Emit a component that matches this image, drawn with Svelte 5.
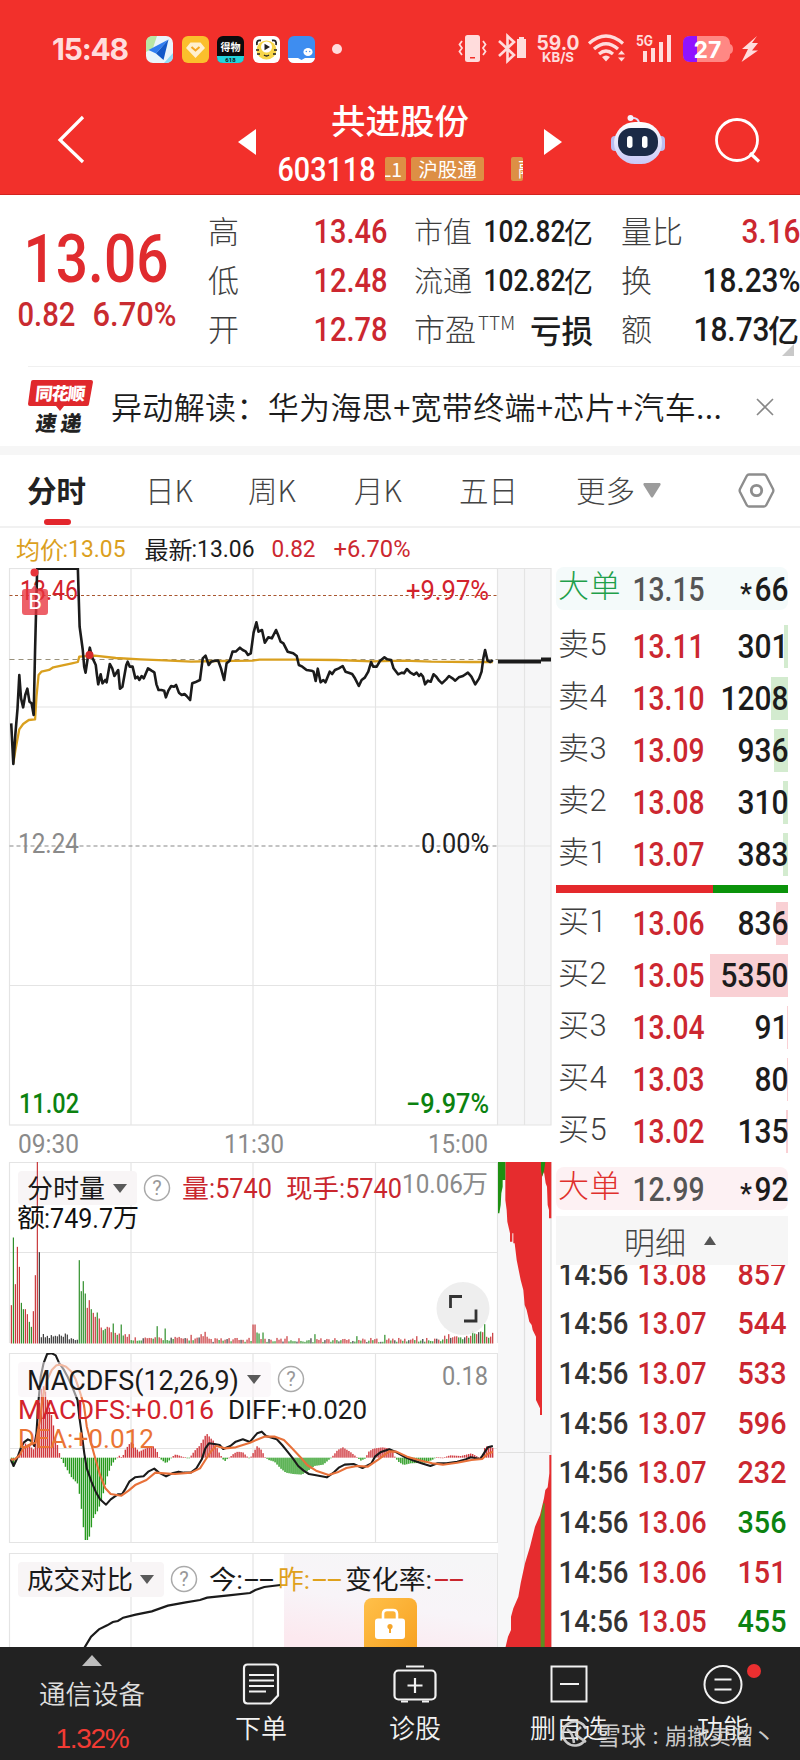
<script>
  const quotes = [
    { a: '高', av: '13.46', b: '市值', bv: '102.82', bu: '亿', c: '量比', cv: '3.16', cw: 56, red: true },
    { a: '低', av: '12.48', b: '流通', bv: '102.82', bu: '亿', c: '换', cv: '18.23%', cw: 95 },
    { a: '开', av: '12.78', b: '市盈', sup: 'TTM', bt: '亏损', c: '额', cv: '18.73', cu: '亿', cw: 73 }
  ];

  const sells = [
    { label: '卖5', price: '13.11', vol: '301', bar: 4 },
    { label: '卖4', price: '13.10', vol: '1208', bar: 17 },
    { label: '卖3', price: '13.09', vol: '936', bar: 14 },
    { label: '卖2', price: '13.08', vol: '310', bar: 5 },
    { label: '卖1', price: '13.07', vol: '383', bar: 5 }
  ];
  const buys = [
    { label: '买1', price: '13.06', vol: '836', bar: 12 },
    { label: '买2', price: '13.05', vol: '5350', bar: 78 },
    { label: '买3', price: '13.04', vol: '91', bar: 1 },
    { label: '买4', price: '13.03', vol: '80', bar: 1 },
    { label: '买5', price: '13.02', vol: '135', bar: 2 }
  ];
  const volWidth = { 2: 31, 3: 48, 4: 65 };

  const ticks = [
    ['13.08', '857', 'red'],
    ['13.07', '544', 'red'],
    ['13.07', '533', 'red'],
    ['13.07', '596', 'red'],
    ['13.07', '232', 'red'],
    ['13.06', '356', 'green'],
    ['13.06', '151', 'red'],
    ['13.05', '455', 'green']
  ];

  const gridX = [131, 253, 375.5];

  const pricePts = '32,820 38,942 44,850 50,775 55,675 60,745 66,772 72,735 78,716 84,755 90,760 96,795 100,600 106,356 222,356 227,530 236,600 240,650 244,668 250,625 256,593 262,620 273,645 276,672 280,703 287,673 292,700 300,690 304,697 313,642 320,655 326,678 337,660 342,716 349,710 360,645 364,635 370,650 378,650 386,685 392,680 397,690 404,678 410,685 422,655 432,662 440,667 446,703 452,720 460,720 468,722 473,742 480,722 488,708 496,710 502,705 510,728 518,735 526,732 532,738 542,750 548,700 556,697 570,690 578,625 586,617 595,645 602,635 612,632 622,632 630,655 639,690 646,640 655,632 663,605 673,604 684,593 692,600 700,604 707,615 715,610 723,548 731,517 737,545 747,540 755,578 765,562 775,565 787,540 793,555 800,575 808,580 820,605 836,610 846,618 852,645 862,650 874,660 888,662 894,665 900,693 906,656 914,697 922,690 928,697 940,665 947,672 955,660 966,655 977,648 985,665 994,668 1004,672 1012,685 1023,708 1031,690 1040,683 1050,665 1058,636 1064,650 1074,650 1084,632 1096,622 1104,628 1115,630 1122,655 1135,673 1146,668 1152,670 1160,657 1170,668 1180,674 1188,668 1195,678 1200,672 1206,680 1212,703 1220,692 1228,695 1236,673 1244,680 1252,692 1260,700 1272,688 1280,678 1290,685 1298,692 1308,682 1320,678 1334,668 1344,680 1355,703 1366,685 1373,665 1378,625 1383,600 1390,632 1398,636 1405,630';
  const avgPts = '38,940 44,900 55,838 66,822 82,810 100,808 104,740 110,675 118,665 140,660 152,652 175,647 205,640 222,636 226,620 270,617 330,624 400,628 470,631 545,635 620,633 720,632 740,629 850,629 960,630 1060,634 1150,632 1230,635 1340,636 1405,636';

  const diffPts = '30,358 38,378 48,355 58,325 66,308 78,298 88,303 96,318 102,280 108,180 114,110 122,70 132,42 145,40 156,46 165,68 178,88 190,112 204,145 217,180 222,230 230,290 236,340 243,385 256,425 268,455 280,478 297,494 310,478 330,463 342,462 352,445 362,425 378,412 402,409 415,395 432,386 445,398 465,409 482,400 500,395 515,398 535,397 550,385 565,358 575,325 585,310 600,312 615,315 625,327 645,318 660,305 680,298 700,306 712,290 720,280 733,275 745,288 775,298 790,315 805,335 820,355 835,378 850,392 865,402 885,406 915,412 935,397 950,382 965,374 990,372 1015,384 1040,370 1050,350 1065,337 1090,328 1110,337 1135,352 1160,362 1180,370 1205,378 1225,370 1250,370 1280,365 1305,358 1318,352 1345,357 1358,335 1366,322 1380,318';
  const deaPts = '30,358 42,358 55,345 66,325 80,315 100,308 112,240 120,170 132,120 145,90 158,76 170,74 185,80 200,95 212,118 225,160 235,195 243,260 255,310 268,360 280,405 295,445 310,462 340,467 360,452 380,434 410,420 435,398 460,400 490,402 535,398 560,385 575,360 590,335 605,318 630,325 660,322 700,308 740,290 770,290 795,300 815,322 840,350 860,375 885,392 920,405 945,397 970,384 1000,378 1030,380 1060,358 1090,334 1110,335 1140,350 1180,362 1210,370 1240,374 1280,368 1320,360 1350,357 1365,342 1380,335';

  // envelope of the MACD histogram, interpolated once per minute
  const envelope = '30,358 35,385 44,365 50,345 70,310 85,320 96,330 104,270 110,190 118,130 126,150 135,190 145,230 155,290 165,335 170,353 180,375 200,412 218,432 226,490 233,560 240,608 250,590 262,530 275,510 288,465 300,410 310,380 320,362 328,353 335,346 342,354 350,330 362,312 370,305 378,322 390,335 402,328 415,322 428,318 438,330 445,350 452,360 465,370 475,360 482,350 492,343 510,350 530,355 538,342 548,328 558,318 568,300 578,280 590,295 600,305 612,335 620,350 628,365 636,357 645,350 655,340 665,335 680,337 692,350 700,355 708,340 720,318 732,330 742,352 752,360 768,365 785,385 800,398 820,402 845,404 865,390 880,378 905,374 920,360 930,350 945,330 960,322 980,335 995,348 1010,362 1022,356 1032,335 1045,326 1070,322 1088,325 1100,335 1106,352 1115,365 1130,375 1150,370 1190,368 1210,360 1220,352 1240,353 1260,346 1290,348 1320,340 1340,352 1350,348 1358,320 1370,318 1382,325'
    .split(' ')
    .map((p) => p.split(',').map(Number));

  function envAt(x) {
    for (let i = 1; i < envelope.length; i++) {
      const [x0, y0] = envelope[i - 1];
      const [x1, y1] = envelope[i];
      if (x <= x1) return y0 + ((y1 - y0) * (x - x0)) / (x1 - x0);
    }
    return 325;
  }

  const macdBars = [];
  for (let i = 0; i < 242; i++) {
    const x = 32 + i * 5.59;
    const y = envAt(x);
    macdBars.push({ x: x / 2.8, y: Math.min(y, 353) / 3 + 1340, h: Math.max(Math.abs(353 - y) / 3, 0.6), up: y < 353 });
  }

  const opening = [115, 318, 178, 290, 230, 122, 103, 103, 88, 65, 50, 97, 205, 545, 274];
  const openingColor = 'rgrrrggrrggrrrk';
  const afterHalt = [250, 157, 187, 150, 107, 130, 103, 92, 80, 93, 75, 48, 40, 44, 50, 48, 34, 60, 32, 26, 30, 57, 24, 28, 20, 28];
  const afterColor = 'ggggrrgrrgrrggrrrgrgrggrrr';
  const peaks = { 73: 52, 77: 45, 90: 26, 95: 28, 96: 22, 97: 35, 121: 57, 122: 57, 123: 33, 124: 30, 126: 33, 138: 22, 152: 28, 173: 22, 187: 26, 203: 22, 219: 28, 231: 38, 232: 30, 233: 28, 234: 34, 235: 36, 236: 34, 237: 58, 241: 32 };
  const colors = { r: '#c9393c', g: '#2f8f2b', k: '#3a3a3a' };

  const volBars = [];
  for (let i = 0; i < 242; i++) {
    const rnd = Math.abs(Math.sin(i * 12.9898) * 43758.5453) % 1;
    let h, c;
    if (i < 15) {
      h = opening[i];
      c = openingColor[i];
    } else if (i < 34) {
      h = i > 28 ? 8 + rnd * 8 : 10 + rnd * 20;
      c = 'k';
    } else if (i < 60) {
      h = afterHalt[i - 34];
      c = afterColor[i - 34];
    } else {
      h = (i < 100 ? 8 : i > 215 ? 12 : 4) + rnd * 13;
      if (peaks[i]) h = peaks[i];
      c = i % 7 === 3 ? 'k' : rnd > 0.5 ? 'r' : 'g';
      if (i === 121 || i === 122 || i === 241) c = 'r';
      if (i === 73 || i === 77 || i === 237 || i === 152) c = 'g';
    }
    volBars.push({ x: 11.3 + i * 1.997, h: h / 3, c: colors[c] });
  }
</script>

<!-- condensed figures for html rows -->
{#snippet din(text, w, cap = 24, weight = 500)}
  <svg class="din" width={w} height={cap}>
    <text x="-1.5" y={cap} textLength={w + 3} lengthAdjust="spacingAndGlyphs" font-size={cap / 0.711} font-weight={weight}>{text}</text>
  </svg>
{/snippet}

<!-- chart label: left edge, vertical centre, drawn width -->
{#snippet lab(x, cy, text, w, fill, size = 26, weight = 400)}
  <text x={x - 1} y={cy + size * 0.36} textLength={w + 2} lengthAdjust="spacingAndGlyphs" font-size={size} font-weight={weight} {fill}>{text}</text>
{/snippet}

{#snippet help(cx, cy)}
  <circle {cx} {cy} r="12.5" fill="#fff" stroke="#aaa" stroke-width="1.5" />
  <text x={cx} y={cy + 7} text-anchor="middle" font-size="20" fill="#999">?</text>
{/snippet}

<div class="page">
  <header>
    <div class="status">
      <span class="clock">15:48</span>
      <div class="apps">
        <svg width="27" height="27" viewBox="0 0 27 27">
          <rect width="27" height="27" rx="7" fill="#e9f4fb" />
          <path d="M0 7Q0 0 7 0H11L7 12 0 16Z" fill="#b9e6a4" />
          <path d="M18 27L27 17V20Q27 27 20 27Z" fill="#8fdcf7" />
          <path d="M22.500 3.500L2.500 14 10 17.500Z" fill="#2f7df0" />
          <path d="M22.500 3.500L10 17.500 17.500 24Z" fill="#1258c8" />
        </svg>
        <svg width="27" height="27" viewBox="0 0 27 27">
          <rect width="27" height="27" rx="6" fill="#fbbf2c" />
          <path d="M8.500 6.500H18.500L23 12 13.500 22 4 12Z" fill="#fff0cf" />
          <path d="M9.500 11L13.500 14.500 17.500 11" fill="none" stroke="#f5a623" stroke-width="2" />
        </svg>
        <svg width="27" height="27" viewBox="0 0 27 27">
          <rect width="27" height="27" rx="6" fill="#0b0b0d" />
          <path d="M0 20H27V21Q27 27 21 27H6Q0 27 0 21Z" fill="#22d3dc" />
          <text x="13.500" y="15" text-anchor="middle" font-size="10" font-weight="700" fill="#fff">得物</text>
          <text x="13.500" y="26" text-anchor="middle" font-size="6" font-weight="700" fill="#111">618</text>
        </svg>
        <svg width="27" height="27" viewBox="0 0 27 27">
          <rect width="27" height="27" rx="6" fill="#fff" />
          <path d="M4 9Q3 3.500 8 4.500M23 9Q24 3.500 19 4.500" fill="none" stroke="#222" stroke-width="1.800" />
          <ellipse cx="13.500" cy="14" rx="10" ry="9.500" fill="#f7d64a" />
          <path d="M3 14H6M21 14H24M4 18H7M20 18H23M11 19Q13.500 21 16 19" stroke="#222" stroke-width="1.300" fill="none" />
          <circle cx="13.500" cy="11" r="5.500" fill="#fff" />
          <path d="M11.500 7.800V14.200L17 11Z" fill="#222" />
        </svg>
        <svg width="27" height="27" viewBox="0 0 27 27">
          <rect width="27" height="27" rx="6" fill="#3e8df0" />
          <path d="M0 22H10L13.500 24 17 22H27Q26 27 21 27H6Q1 27 0 22Z" fill="#fff" />
          <ellipse cx="20" cy="16" rx="4.600" ry="4" fill="#fff" />
          <circle cx="18.300" cy="15.500" r=".7" fill="#3e8df0" />
          <circle cx="21.700" cy="15.500" r=".7" fill="#3e8df0" />
        </svg>
      </div>
      <span class="dot"></span>
      <svg class="sys" width="304" height="30" viewBox="457 34 304 30" fill="#ffdcdc">
        <rect x="465" y="35" width="15" height="27" rx="2.500" />
        <rect x="470" y="57" width="5" height="1.500" fill="#f2302b" />
        <path d="M462 41L459.500 44.500 462 48 459.500 51.500 462 55M483 41L485.500 44.500 483 48 485.500 51.500 483 55" fill="none" stroke="#ffdcdc" stroke-width="1.800" />
        <path d="M499 41L514 55 507.500 61V36L514 42 499 56" fill="none" stroke="#ffdcdc" stroke-width="2.600" />
        <path d="M519 37H524V39H526V58H517V39H519Z" />
        <text x="536.500" y="49.500" font-size="19.500" font-weight="700" textLength="43" lengthAdjust="spacingAndGlyphs">59.0</text>
        <text x="542" y="61.500" font-size="13.500" font-weight="700" textLength="32" lengthAdjust="spacingAndGlyphs">KB/S</text>
        <path d="M589 43.500Q606 28.500 623 43.500M594 49Q606 38.500 618 49M599 54Q606 48 613 54" fill="none" stroke="#ffdcdc" stroke-width="3.200" />
        <path d="M602 57Q606 54 610 57L606 61.500ZM618 54.500L621.500 50.500 625 54.500ZM618 57.500H625L621.500 61.500Z" />
        <text x="636" y="46" font-size="14" font-weight="700" textLength="17" lengthAdjust="spacingAndGlyphs">5G</text>
        <path d="M643 51H647V62H643ZM651 48H655V62H651ZM659 42H663V62H659ZM667 35H671V62H667Z" />
        <rect x="683" y="36" width="47" height="26" rx="7" fill="#ff8884" />
        <path d="M730 44Q733 45 733 49T730 54Z" fill="#ff8884" />
        <path d="M697 36V62H690Q683 62 683 55V43Q683 36 690 36Z" fill="#9013fe" />
        <text x="707.500" y="57.500" text-anchor="middle" font-size="23" font-weight="700" fill="#fff">27</text>
        <path d="M757 36L742 49H748L741.500 62 758 50.500H752L758 43H752Z" />
      </svg>
    </div>
    <div class="nav">
      <svg class="back" width="28" height="50" viewBox="0 0 28 50"><path d="M26 2L3 25 26 47" fill="none" stroke="#fff" stroke-width="3.200" /></svg>
      <svg class="prev" width="19" height="28" viewBox="0 0 19 28"><path d="M0 14L18 1V27Z" fill="#fff" /></svg>
      <div class="stock">
        <h1>共进股份</h1>
        <div class="code">
          {@render din('603118', 95, 23)}
          <span class="tag first">L1</span>
          <span class="tag">沪股通</span>
          <span class="tag last">融</span>
        </div>
      </div>
      <svg class="next" width="19" height="28" viewBox="0 0 19 28"><path d="M19 14L1 1V27Z" fill="#fff" /></svg>
      <svg class="robot" width="56" height="52" viewBox="0 0 56 52">
        <defs>
          <linearGradient id="shell" x1="0" y1="0" x2="0" y2="1">
            <stop offset="0" stop-color="#fff" />
            <stop offset="1" stop-color="#c9c9f7" />
          </linearGradient>
        </defs>
        <path d="M20 4Q29 3 29 10" fill="none" stroke="#dfe0fb" stroke-width="2" />
        <circle cx="20.500" cy="4" r="3" fill="#f5f4ff" />
        <rect x="1" y="22" width="8" height="15" rx="4" fill="#b9bdf0" />
        <rect x="47" y="22" width="8" height="15" rx="4" fill="#b9bdf0" />
        <rect x="4" y="8" width="48" height="42" rx="21" fill="url(#shell)" />
        <rect x="8" y="14" width="40" height="28" rx="13" fill="#1b2a47" />
        <rect x="17" y="22" width="5.500" height="12" rx="2.700" fill="#fff" />
        <rect x="32" y="22" width="5.500" height="12" rx="2.700" fill="#fff" />
      </svg>
      <svg class="search" width="46" height="46" viewBox="0 0 46 46"><circle cx="22" cy="22" r="20.500" fill="none" stroke="#fff" stroke-width="2.800" /><path d="M35 35L44 43.500" stroke="#fff" stroke-width="3.200" /></svg>
    </div>
  </header>

  <section class="quote">
    <div class="last-price">
      <div class="big">{@render din('13.06', 142, 48, 500)}</div>
      <div class="change">{@render din('0.82', 55, 23.5, 500)}{@render din('6.70%', 81, 23.5, 500)}</div>
    </div>
    <div class="stats">
      {#each quotes as q}
        <div class="stat">
          <span class="key k1">{q.a}</span>
          <span class="v1 red">{@render din(q.av, 71)}</span>
          <span class="key k2" class:big-key={q.sup}>{q.b}{#if q.sup}<sup>{q.sup}</sup>{/if}</span>
          <span class="v2">
            {#if q.bt}<b>{q.bt}</b>{:else}{@render din(q.bv, 79, 22)}<span class="unit small">{q.bu}</span>{/if}
          </span>
          <span class="key k3">{q.c}</span>
          <span class="v3" class:red={q.red}>{@render din(q.cv, q.cw)}{#if q.cu}<span class="unit">{q.cu}</span>{/if}</span>
        </div>
      {/each}
    </div>
    <i class="corner"></i>
  </section>

  <section class="news">
    <svg width="66" height="56" viewBox="0 0 66 56">
      <path d="M5 1H63Q65 1 65 3L61 25Q61 27 59 27H36L32 32 28 27H2Q0 27 0 25L3 3Q3 1 5 1Z" fill="#e0282c" />
      <text x="7" y="21" font-size="17.500" font-weight="900" fill="#fff" textLength="50" transform="skewX(-6) translate(2 0)">同花顺</text>
      <text x="10" y="52" font-size="21" font-weight="900" fill="#222" textLength="46" transform="skewX(-8) translate(4 0)">速递</text>
    </svg>
    <p>异动解读：华为海思+宽带终端+芯片+汽车...</p>
    <svg class="close" width="18" height="18" viewBox="0 0 18 18"><path d="M1 1L17 17M17 1L1 17" stroke="#888" stroke-width="1.600" /></svg>
  </section>

  <nav class="tabs">
    <span class="active" style="width: 118px">分时</span>
    <span style="width: 103px">日K</span>
    <span style="width: 106px">周K</span>
    <span style="width: 105px">月K</span>
    <span style="width: 117px">五日</span>
    <span>更多</span>
    <svg class="more" width="18" height="15" viewBox="0 0 18 15"><path d="M1 0H17Q18 1 17.500 2L10 14Q9 15 8 14L.5 2Q0 1 1 0Z" fill="#9c9c9c" /></svg>
    <svg class="gear" width="37" height="35" viewBox="0 0 37 35"><path d="M11 1.500H26Q27.500 1.500 28.300 3L35 16Q35.700 17.500 35 19L28.300 32Q27.500 33.500 26 33.500H11Q9.500 33.500 8.700 32L2 19Q1.300 17.500 2 16L8.700 3Q9.500 1.500 11 1.500Z" fill="none" stroke="#8d8d8d" stroke-width="2.400" /><circle cx="18.500" cy="17.500" r="5.200" fill="none" stroke="#8d8d8d" stroke-width="2.800" /></svg>
  </nav>

  <main>
    <div class="left">
      <div class="info">
        <span class="gold">均价{@render din(':13.05', 60, 17, 400)}</span>
        <span>最新{@render din(':13.06', 60, 17, 400)}</span>
        <span class="red">{@render din('0.82', 41, 17, 400)}</span>
        <span class="red">{@render din('+6.70%', 74, 17, 400)}</span>
      </div>

      <svg class="chart" width="552" height="594" viewBox="0 568 552 594">
        <rect x="498" y="568" width="53" height="557" fill="#f6f6f7" />
        <g stroke="#e4e4e4" stroke-width="1.200" fill="none">
          <rect x="9.500" y="568.500" width="488" height="556.500" />
          <path d="M9.500 707H551M9.500 985.500H551M498 846H551M498 568.500H551V1125H498M524.500 568V1125" />
          {#each gridX as x}
            <path d="M{x} 568V1125" />
          {/each}
        </g>
        <path d="M9.500 595.500H498" stroke="#a8562f" stroke-width="1.200" stroke-dasharray="3 2.500" />
        <path d="M9.500 659.500H498" stroke="#99917c" stroke-width="1.200" stroke-dasharray="5 4" />
        <path d="M9.500 846H498" stroke="#888" stroke-width="1.200" stroke-dasharray="4 3" />
        {@render lab(21, 590, '13.46', 56, '#d3232c', 27)}
        {@render lab(407, 590, '+9.97%', 81, '#d3232c', 27)}
        {@render lab(19, 843, '12.24', 59, '#8a8a8a', 27)}
        {@render lab(422, 843, '0.00%', 66, '#222', 27)}
        {@render lab(20, 1103.5, '11.02', 58, '#0c8210', 27, 500)}
        {@render lab(407, 1103.5, '−9.97%', 81, '#0c8210', 27, 500)}
        {@render lab(19, 1144, '09:30', 59, '#8a8a8a', 26)}
        {@render lab(225, 1144, '11:30', 58, '#8a8a8a', 26)}
        {@render lab(429, 1144, '15:00', 58, '#8a8a8a', 26)}
        <g transform="translate(0 450) scale(.35075 .33333)" fill="none" stroke-linejoin="round">
          <polyline points={avgPts} stroke="#d9a01f" stroke-width="2.300" vector-effect="non-scaling-stroke" />
          <polyline points={pricePts} stroke="#1b1b1b" stroke-width="2.600" vector-effect="non-scaling-stroke" />
        </g>
        <path d="M498 661.500H541M541 659.500H551" stroke="#1b1b1b" stroke-width="4" />
        <circle cx="34.500" cy="572.500" r="4" fill="#e8343a" />
        <circle cx="89.500" cy="655" r="4" fill="#d62a2c" />
        <path d="M25 589H31.500L34.500 585 37.500 589H45Q48 589 48 592V612Q48 615 45 615H25Q22 615 22 612V592Q22 589 25 589Z" fill="#e8333d" opacity=".78" />
        <text x="35" y="609" text-anchor="middle" font-size="22" fill="#fff">B</text>
      </svg>

      <div class="lower">
        <div class="panels">
          <svg class="chart" width="498" height="191" viewBox="0 1162 498 191">
            <g stroke="#e4e4e4" stroke-width="1.200" fill="none">
              <path d="M9.500 1343V1162.500H497.500V1343M9.500 1252.500H497.500" />
              {#each gridX as x}
                <path d="M{x} 1162V1343" />
              {/each}
            </g>
            <rect x="18" y="1171" width="119" height="34" rx="4" fill="#f8f5f6" />
            {#each volBars as b}
              <rect x={b.x - 0.5} y={1343.5 - b.h} width="1.2" height={b.h} fill={b.c} />
            {/each}
            {@render lab(28, 1188.5, '分时量', 76, '#1a1a1a', 26)}
            <path d="M113 1184H127L120 1193Z" fill="#5a5a5a" />
            {@render help(157, 1188)}
            {@render lab(183, 1188.5, '量', 25, '#c9262d', 26)}
            {@render lab(210, 1188.5, ':5740', 61, '#c9262d', 27)}
            {@render lab(287, 1188.5, '现手', 51, '#c9262d', 26)}
            {@render lab(340, 1188.5, ':5740', 61, '#c9262d', 27)}
            {@render lab(403, 1184, '10.06', 59, '#8a8a8a', 26)}
            {@render lab(463, 1184, '万', 24, '#8a8a8a', 25)}
            {@render lab(18, 1218, '额', 26, '#111', 26)}
            {@render lab(45, 1218.5, ':749.7', 67, '#111', 27)}
            {@render lab(114, 1218, '万', 24, '#111', 26)}
            <circle cx="463" cy="1308.500" r="26.500" fill="#ececec" opacity=".9" />
            <path d="M450.500 1308V1296.500H462M464 1321H476V1309.500" fill="none" stroke="#333" stroke-width="2.800" />
          </svg>

          <svg class="chart" width="498" height="200" viewBox="0 1353 498 200">
            <g stroke="#e4e4e4" stroke-width="1.200" fill="none">
              <path d="M9.500 1353.500H497.500V1542.500H9.500ZM9.500 1448.500H497.500" />
              {#each gridX as x}
                <path d="M{x} 1353V1543" />
              {/each}
            </g>
            {#each macdBars as b}
              <rect x={b.x - 0.6} y={b.y} width="1.4" height={b.h} fill={b.up ? '#d0393f' : '#279a1e'} />
            {/each}
            <g transform="translate(0 1340) scale(.35714 .33333)" fill="none" stroke-linejoin="round">
              <polyline points={diffPts} stroke="#1b1b1b" stroke-width="2.100" vector-effect="non-scaling-stroke" />
              <polyline points={deaPts} stroke="#e8713a" stroke-width="2.100" vector-effect="non-scaling-stroke" />
            </g>
            <rect x="18" y="1362" width="253" height="35" rx="4" fill="#f8f3f5" opacity=".55" />
            {@render lab(28, 1380.5, 'MACDFS(12,26,9)', 210, '#1a1a1a', 27)}
            <path d="M247 1375H261L254 1384Z" fill="#5a5a5a" />
            {@render help(291, 1379)}
            {@render lab(443, 1375.5, '0.18', 44, '#8a8a8a', 26)}
            {@render lab(19, 1409.5, 'MACDFS:+0.016', 194, '#d3232c', 26)}
            {@render lab(229, 1409.5, 'DIFF:+0.020', 137, '#1a1a1a', 26)}
            {@render lab(19, 1439, 'DEA:+0.012', 134, '#ea7434', 26)}
          </svg>

          <svg class="chart" width="498" height="94" viewBox="0 1553 498 94">
            <defs>
              <linearGradient id="veil" x1="0.7" y1="0" x2="0.3" y2="1">
                <stop offset="0" stop-color="#f6f6f7" />
                <stop offset=".55" stop-color="#f8f4f8" />
                <stop offset="1" stop-color="#fce9ef" />
              </linearGradient>
              <linearGradient id="amber" x1="0" y1="0" x2="1" y2="1">
                <stop offset="0" stop-color="#ffc04a" />
                <stop offset="1" stop-color="#f7a01f" />
              </linearGradient>
            </defs>
            <g stroke="#e4e4e4" stroke-width="1.200" fill="none">
              <path d="M9.500 1647V1553.500H497.500V1647M131 1553V1647M253 1553V1647" />
            </g>
            <rect x="284" y="1554" width="213" height="93" fill="url(#veil)" />
            <rect x="18" y="1562" width="146" height="35" rx="4" fill="#f8f5f6" />
            <g transform="translate(0 1340) scale(.35714 .33333)">
              <polyline points="236,924 255,890 277,868 300,856 316,846 330,843 345,833 380,824 425,814 470,797 520,787 560,780 580,773 640,766 700,759 715,750 740,741 785,735" fill="none" stroke="#1b1b1b" stroke-width="2.200" vector-effect="non-scaling-stroke" />
            </g>
            {@render lab(28, 1579.5, '成交对比', 104, '#1a1a1a', 26)}
            <path d="M140 1575H154L147 1584Z" fill="#5a5a5a" />
            {@render help(184, 1579)}
            {@render lab(210, 1579.5, '今:', 32, '#1a1a1a', 26)}
            {@render lab(279, 1579.5, '昨:', 30, '#dfa11c', 26)}
            {@render lab(346, 1579.5, '变化率:', 85, '#1a1a1a', 26)}
            {@render lab(245, 1578, '--', 28, '#1a1a1a', 28)}
            {@render lab(313, 1578, '--', 28, '#dfa11c', 28)}
            {@render lab(435, 1578, '--', 28, '#c9262d', 28)}
            <rect x="364" y="1598" width="53" height="56" rx="8" fill="url(#amber)" />
            <path d="M383 1619V1614Q383 1610 387 1610H393Q397 1610 397 1614V1619" fill="none" stroke="#fff" stroke-width="2.600" />
            <rect x="375" y="1618.500" width="30" height="20.500" rx="3" fill="#fff" />
            <circle cx="390" cy="1626.500" r="2.600" fill="#f5a52a" />
            <rect x="389" y="1627" width="2" height="6" fill="#f5a52a" />
          </svg>
        </div>

        <svg class="chart" width="54" height="485" viewBox="498 1162 54 485">
          <rect x="498" y="1162" width="53" height="485" fill="#f7f7f8" />
          <path d="M498 1452.500H551M524.500 1162V1647M551 1162V1647" stroke="#e0e0e0" stroke-width="1.200" />
          <g transform="translate(480 1150) scale(.33333)">
            <path d="M76 36H186V795H180V775L168 750V560L158 540 155 525 148 515 140 480 134 465 130 420 122 390 110 330 104 280H100V250H97V275H90V250L82 215 80 180 76 150Z" fill="#e62c2e" />
            <path d="M186 36H214V205H207V180L203 165 201 110 197 100 192 66 186 80Z" fill="#e62c2e" />
            <path d="M54 36H76V90H68V110L64 130 62 165 58 190H54ZM183 36H196L192 62 186 80 183 60Z" fill="#1e9012" />
            <path d="M208 915H214V1494H76L84 1460 93 1440V1400L100 1375 115 1340 122 1300 135 1240 150 1190 165 1130 180 1095 192 1045 196 1020 203 1012 208 970Z" fill="#e62c2e" />
            <path d="M182 1494V1100L190 1060H194V1494Z" fill="#5d8f20" />
          </g>
        </svg>
      </div>
    </div>

    <aside>
      <div class="row deal sell">
        <span class="name green2">大单</span>
        <span class="price gray">{@render din('13.15', 69)}</span>
        <span class="vol"><span class="star">*</span>{@render din('66', 31)}</span>
      </div>
      <div class="book">
        {#each sells as r}
          <div class="row">
            <i class="depth down" style="width: {r.bar}px"></i>
            <span class="name">{r.label}</span>
            <span class="price">{@render din(r.price, 69)}</span>
            <span class="vol">{@render din(r.vol, volWidth[r.vol.length])}</span>
          </div>
        {/each}
      </div>
      <div class="ratio"><i></i></div>
      <div class="book">
        {#each buys as r}
          <div class="row">
            <i class="depth up" style="width: {r.bar}px"></i>
            <span class="name">{r.label}</span>
            <span class="price">{@render din(r.price, 69)}</span>
            <span class="vol">{@render din(r.vol, volWidth[r.vol.length])}</span>
          </div>
        {/each}
      </div>
      <div class="row deal buy">
        <span class="name red2">大单</span>
        <span class="price gray">{@render din('12.99', 69)}</span>
        <span class="vol"><span class="star">*</span>{@render din('92', 31)}</span>
      </div>
      <div class="detail">明细<i></i></div>
      <div class="ticks">
        {#each ticks as [price, vol, dir]}
          <div class="tick">
            <span class="time">{@render din('14:56', 67, 22.5)}</span>
            <span class="price">{@render din(price, 66, 22.5)}</span>
            <span class="vol {dir}">{@render din(vol, 46, 22.5)}</span>
          </div>
        {/each}
      </div>
    </aside>
  </main>

  <footer>
    <div class="sector">
      <i></i>
      <span>通信设备</span>
      <em>1.32%</em>
    </div>
    <div class="item">
      <svg width="44" height="42" viewBox="0 0 44 42" fill="none" stroke="#f2f2f2" stroke-width="2.200"><path d="M8.500 1.500H35.500Q39 1.500 39 5V32.500L31.500 40.500H8.500Q5 40.500 5 37V5Q5 1.500 8.500 1.500Z" /><path d="M10 12H35M10 17.500H35M10 23H35M10 28.500H27" /></svg>
      <span>下单</span>
    </div>
    <div class="item">
      <svg width="44" height="42" viewBox="0 0 44 42" fill="none" stroke="#f2f2f2" stroke-width="2.200"><rect x="1.500" y="7.500" width="41" height="29" rx="4" /><path d="M13 3.500H31M22 15V30M14.500 22.500H29.500M8 38.500H15M29 38.500H36" /></svg>
      <span>诊股</span>
    </div>
    <div class="item">
      <svg width="44" height="42" viewBox="0 0 44 42" fill="none" stroke="#f2f2f2" stroke-width="2"><rect x="4.500" y="3.500" width="35" height="35" /><path d="M13 21H32" /></svg>
      <span>删自选</span>
    </div>
    <div class="item">
      <svg width="44" height="42" viewBox="0 0 44 42" fill="none" stroke="#f2f2f2" stroke-width="2"><circle cx="22" cy="21.500" r="18.500" /><path d="M13.500 16.500H30.500M13.500 26.500H30.500" /></svg>
      <span>功能</span>
      <i class="badge"></i>
    </div>
    <div class="watermark">
      <svg width="28" height="28" viewBox="0 0 28 28" fill="none" stroke="#d8d8d8" stroke-width="2.600"><path d="M24 20A12 12 0 1 1 25 9" /><path d="M6 9Q12 13 13 23M20 7Q14 12 15 15 19 18 25 22" /></svg>
      <span class="brand">雪球</span><span class="colon">:</span><span>崩撤卖溜丶</span>
    </div>
  </footer>
</div>

<style>
  :global(body) {
    background: #fff;
  }

  .page {
    width: 800px;
    height: 1760px;
    overflow: hidden;
    background: #fff;
    color: #1c1c1c;
    font-family: 'Noto Sans CJK SC', sans-serif;
  }

  svg {
    display: block;
    flex-shrink: 0;
  }

  svg text {
    font-family: Roboto, 'Noto Sans CJK SC', sans-serif;
  }

  .din {
    overflow: visible;
    fill: currentColor;
  }

  .red {
    color: #cc2730;
  }

  .green {
    color: #0c8210;
  }

  .gold {
    color: #dba01e;
  }

  header {
    height: 195px;
    box-sizing: border-box;
    padding-top: 34px;
    background: #f2302b;
    border-bottom: 1px solid #d3231f;
    color: #fff;
  }

  .status {
    display: flex;
    align-items: center;
    height: 30px;
    padding-left: 52px;
  }

  .clock {
    width: 94px;
    color: #ffdcdc;
    font: 700 30px/30px Inter, sans-serif;
    letter-spacing: -1.2px;
  }

  .apps {
    display: flex;
    gap: 8.5px;
  }

  .dot {
    width: 10px;
    height: 10px;
    margin: 0 115px 0 17px;
    border-radius: 50%;
    background: #ffdcdc;
  }

  .sys {
    overflow: visible;
  }

  .sys text {
    font-family: Inter, sans-serif;
  }

  .nav {
    display: flex;
    align-items: flex-start;
    padding-left: 57px;
  }

  .back {
    margin-top: 51px;
  }

  .prev {
    margin: 64px 0 0 153px;
  }

  .stock {
    width: 262px;
    margin: 32px 0 0 22px;
  }

  h1 {
    margin: 0 0 0 52px;
    font-size: 34.5px;
    font-weight: 500;
    line-height: 46px;
  }

  .code {
    display: flex;
    align-items: center;
    height: 50px;
    margin-top: 2px;
  }

  .tag {
    box-sizing: border-box;
    width: 73px;
    height: 24px;
    margin-left: 5px;
    border-radius: 2px;
    background: #dd8f45;
    font-size: 19.5px;
    line-height: 23px;
    text-align: center;
    overflow: hidden;
  }

  .tag.first {
    display: flex;
    justify-content: flex-end;
    width: 21px;
    margin-left: 11px;
    padding-right: 4px;
  }

  .tag.last {
    width: 12px;
    margin-left: 27px;
    padding-left: 7px;
    text-align: left;
  }

  .next {
    margin: 64px 0 0 2px;
  }

  .robot {
    margin: 50px 0 0 48px;
  }

  .search {
    margin: 54px 0 0 49px;
  }

  .quote {
    display: flex;
    position: relative;
    height: 171px;
  }

  .last-price {
    width: 208px;
    color: #e02b2e;
  }

  .big {
    height: 48px;
    margin: 39px 0 0 25px;
  }

  .change {
    display: flex;
    gap: 20px;
    margin: 20px 0 0 19px;
    color: #c92b30;
  }

  .stats {
    padding-top: 12px;
  }

  .stat {
    display: flex;
    align-items: center;
    height: 48.7px;
    width: 592px;
  }

  .key {
    color: #3e3e3e;
    font-size: 31px;
    font-weight: 300;
    line-height: 48px;
    white-space: nowrap;
    position: relative;
    top: -1px;
  }

  .k1 {
    width: 107px;
  }

  .v1 {
    width: 72px;
  }

  .k2 {
    box-sizing: border-box;
    width: 93px;
    padding-left: 27px;
    font-size: 29px;
  }

  .big-key {
    font-size: 31px;
  }

  sup {
    display: inline-block;
    margin-left: 2px;
    font-size: 19px;
    line-height: 18px;
    vertical-align: 11px;
  }

  .v2 {
    display: flex;
    justify-content: flex-end;
    align-items: center;
    width: 113px;
  }

  .v2 b {
    margin-left: -40px;
    font-size: 31.5px;
    font-weight: 500;
    line-height: 48px;
  }

  .unit {
    font-size: 31px;
    line-height: 46px;
    font-weight: 500;
  }

  .unit.small {
    font-size: 29px;
    font-weight: 400;
  }

  .k3 {
    width: 64px;
    margin-left: 28px;
  }

  .v3 {
    display: flex;
    flex: 1;
    align-items: center;
    justify-content: flex-end;
    margin-right: 1px;
  }

  .corner {
    position: absolute;
    right: 6px;
    bottom: 10px;
    border-left: 12px solid transparent;
    border-bottom: 12px solid #c9c9c9;
  }

  .news {
    display: flex;
    align-items: center;
    height: 79px;
    padding: 0 26px 0 0;
    margin-left: 28px;
    border-top: 1px solid #f0f0f0;
  }

  .news p {
    flex: 1;
    margin: -2px 0 0 17px;
    font-size: 31px;
    font-weight: 350;
    letter-spacing: 0.35px;
    line-height: 60px;
    white-space: nowrap;
  }

  .tabs {
    display: flex;
    align-items: center;
    height: 71px;
    padding-left: 27px;
    border-top: 9px solid #f6f6f6;
    border-bottom: 2px solid #f1f1f1;
    color: #444;
    font-size: 29.5px;
    font-weight: 300;
  }

  .tabs span {
    line-height: 66px;
    padding-bottom: 3px;
  }

  .tabs .active {
    position: relative;
    color: #222;
    font-weight: 700;
  }

  .active::after {
    content: '';
    position: absolute;
    left: 17px;
    bottom: 0;
    width: 27px;
    height: 6px;
    border-radius: 3px;
    background: #e3262c;
  }

  .more {
    margin-left: 8px;
  }

  .gear {
    margin-left: 77px;
  }

  main {
    display: flex;
    height: 1119px;
  }

  .left {
    width: 555px;
  }

  .info {
    display: flex;
    gap: 20.5px;
    height: 40px;
    align-items: center;
    padding: 1px 0 0 16px;
    box-sizing: border-box;
  }

  .info span {
    display: flex;
    align-items: center;
    font-size: 24px;
    line-height: 30px;
  }

  .lower {
    display: flex;
  }

  aside {
    width: 232px;
    padding-top: 39px;
    margin-left: 1px;
    overflow: hidden;
  }

  .row {
    display: flex;
    position: relative;
    align-items: center;
    height: 52px;
  }

  .name {
    width: 76px;
    padding-left: 2px;
    font-family: Roboto, 'Noto Sans CJK SC', sans-serif;
    font-size: 31px;
    font-weight: 300;
    letter-spacing: 0.6px;
    line-height: 50px;
    color: #3e3e3e;
    margin-top: -3px;
  }

  .price {
    flex: 1;
    color: #cc2730;
  }

  .vol {
    display: flex;
    position: relative;
    padding-right: 1px;
  }

  .star {
    position: relative;
    top: 5px;
    margin-right: 4px;
    font: 500 27px/24px Roboto, sans-serif;
  }

  .deal {
    height: 43px;
    border-radius: 8px;
  }

  .deal.sell {
    margin-bottom: 10px;
    background: #f4fafa;
  }

  .deal.buy {
    margin: 10px 0 6px;
    background: #fdf1f3;
  }

  .green2 {
    color: #1fa04a;
  }

  .red2 {
    color: #e0302c;
  }

  .gray {
    color: #555;
  }

  .depth {
    position: absolute;
    right: 0;
    top: 5px;
    height: 43px;
  }

  .down {
    background: #d3ebcf;
  }

  .up {
    background: #f9d0d4;
  }

  .ratio {
    height: 8px;
    margin: 5px 0 4px;
    background: #0b930b;
  }

  .ratio i {
    display: block;
    width: 67.5%;
    height: 8px;
    background: #e4292c;
  }

  .detail {
    display: flex;
    align-items: center;
    justify-content: center;
    height: 49px;
    padding-right: 4px;
    background: #f6f6f6;
    color: #444;
    font-size: 31px;
    font-weight: 300;
    line-height: 49px;
  }

  .detail i {
    margin-left: 18px;
    border: 6.5px solid transparent;
    border-top: 0;
    border-bottom: 9px solid #555;
  }

  .ticks {
    height: 382px;
    overflow: hidden;
  }

  .tick {
    display: flex;
    align-items: center;
    height: 49.7px;
    padding-left: 4px;
  }

  .tick:first-child {
    margin-top: -17px;
  }

  .time {
    width: 79px;
    color: #333;
  }

  .vol.red {
    color: #cc2730;
    padding-right: 3px;
  }

  .vol.green {
    color: #0c8210;
    padding-right: 3px;
  }

  footer {
    display: flex;
    position: relative;
    height: 113px;
    background: #222;
    color: #f2f2f2;
  }

  .sector {
    display: flex;
    flex-direction: column;
    align-items: center;
    width: 184px;
    color: #dedede;
    font-size: 26.5px;
    font-weight: 350;
  }

  .sector i {
    margin-top: 8px;
    border: 10px solid transparent;
    border-top: 0;
    border-bottom: 11px solid #bdbdbd;
  }

  .sector span {
    line-height: 54px;
  }

  .sector em {
    color: #f13b34;
    font: normal 28px/38px 'Liberation Sans', sans-serif;
    letter-spacing: -1.3px;
  }

  .item {
    display: flex;
    flex-direction: column;
    align-items: center;
    position: relative;
    width: 154px;
    padding-top: 16px;
    font-size: 26px;
    font-weight: 350;
  }

  .item span {
    line-height: 43px;
    white-space: nowrap;
  }

  .badge {
    position: absolute;
    left: 101px;
    top: 17px;
    width: 14px;
    height: 14px;
    border-radius: 50%;
    background: #ea2f30;
  }

  .watermark {
    display: flex;
    position: absolute;
    left: 561px;
    top: 73px;
    align-items: center;
    color: #d8d8d8;
    font-size: 22px;
    line-height: 28px;
    opacity: 0.92;
  }

  .brand {
    margin-left: 7px;
    font-size: 25px;
  }

  .colon {
    width: 19px;
    text-align: center;
  }
</style>
